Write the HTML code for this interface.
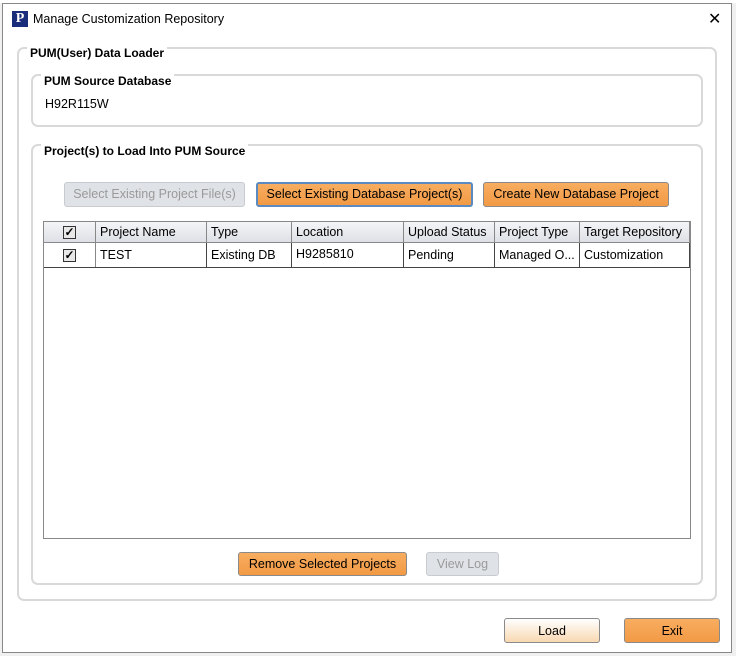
<!DOCTYPE html>
<html><head><style>
*{box-sizing:border-box;margin:0;padding:0}
body{width:736px;height:656px;background:#f0f0f0;font-family:"Liberation Sans",sans-serif;font-size:12.5px;color:#000;position:relative;overflow:hidden}
.a{position:absolute}
.win{left:2px;top:3px;width:730px;height:650px;background:#fff;border:1px solid #888}
.grp{border:2px solid #d9d9d9;border-radius:7px}
.lbl{background:#fff;font-weight:bold;font-size:12px;padding:0 3px;line-height:15px}
.btn{border-radius:3px;text-align:center;font-size:12.5px;line-height:23px;border:1px solid #8a8a8a}
.or{background:linear-gradient(#f8ad60,#f29a45);}
.dis{background:#dfe2e6;color:#9a9a9a;border-color:#c8ccd0}
.cell{position:absolute;top:0;height:100%;border-right:1px solid #888;padding-left:4px;line-height:21px;overflow:hidden;white-space:nowrap}
.cb{display:inline-block;width:13px;height:13px;border:1px solid #333;background:#e8e8e8;margin-top:4px;font-size:12px;line-height:11px;text-align:center;font-weight:bold}
</style></head><body>
<div class="a" style="left:0;top:0;width:736px;height:3px;background:#fff"></div>
<div class="a win">
 <div class="a" style="left:9px;top:7px;width:16px;height:16px;background:#1a2d7a;color:#fff;font-family:'Liberation Serif',serif;font-weight:bold;font-size:14px;line-height:16px;text-align:center">P</div>
 <div class="a" style="left:30px;top:8px;font-size:12.5px">Manage Customization Repository</div>
 <div class="a" style="left:705px;top:5px;font-size:16px;font-weight:300">✕</div>
</div>
<div class="a grp" style="left:17px;top:47px;width:700px;height:554px"></div>
<div class="a lbl" style="left:27px;top:46px">PUM(User) Data Loader</div>
<div class="a grp" style="left:31px;top:74px;width:672px;height:53px"></div>
<div class="a lbl" style="left:41px;top:74px">PUM Source Database</div>
<div class="a" style="left:45px;top:97px;font-size:12.5px">H92R115W</div>
<div class="a grp" style="left:31px;top:144px;width:672px;height:441px"></div>
<div class="a lbl" style="left:41px;top:144px">Project(s) to Load Into PUM Source</div>
<div class="a btn dis" style="left:64px;top:182px;width:181px;height:25px">Select Existing Project File(s)</div>
<div class="a btn or" style="left:256px;top:182px;width:217px;height:25px;border:2px solid #5a8ac0;line-height:21px">Select Existing Database Project(s)</div>
<div class="a btn or" style="left:483px;top:182px;width:186px;height:25px">Create New Database Project</div>
<div class="a" style="left:43px;top:221px;width:648px;height:318px;border:1px solid #888;background:#fff"></div>
<div class="a" style="left:44px;top:222px;width:646px;height:21px;background:linear-gradient(#f4f5f7,#dde0e5);border-bottom:1px solid #888">
 <div class="cell" style="left:0;width:52px;text-align:center;padding:0"><span class="cb">✓</span></div>
 <div class="cell" style="left:52px;width:111px;line-height:20px">Project Name</div>
 <div class="cell" style="left:163px;width:85px;line-height:20px">Type</div>
 <div class="cell" style="left:248px;width:112px;line-height:20px">Location</div>
 <div class="cell" style="left:360px;width:91px;line-height:20px">Upload Status</div>
 <div class="cell" style="left:451px;width:85px;line-height:20px">Project Type</div>
 <div class="cell" style="left:536px;width:110px;line-height:20px">Target Repository</div>
</div>
<div class="a" style="left:44px;top:243px;width:646px;height:25px;border-bottom:1px solid #444">
 <div class="cell" style="left:0;width:52px;text-align:center;padding:0;line-height:24px"><span class="cb">✓</span></div>
 <div class="cell" style="left:52px;width:111px;line-height:25px;border-color:#444">TEST</div>
 <div class="cell" style="left:163px;width:85px;line-height:25px;border-color:#444">Existing DB</div>
 <div class="cell" style="left:248px;width:112px;line-height:22px;border-color:#444">H9285810</div>
 <div class="cell" style="left:360px;width:91px;line-height:25px;border-color:#444">Pending</div>
 <div class="cell" style="left:451px;width:85px;line-height:25px;border-color:#444">Managed O...</div>
 <div class="cell" style="left:536px;width:110px;line-height:25px;border-color:#444">Customization</div>
</div>
<div class="a btn or" style="left:238px;top:552px;width:169px;height:24px">Remove Selected Projects</div>
<div class="a btn dis" style="left:426px;top:552px;width:73px;height:24px">View Log</div>
<div class="a btn" style="left:504px;top:618px;width:96px;height:25px;background:linear-gradient(#fff,#f8d8b0);line-height:24px">Load</div>
<div class="a btn or" style="left:624px;top:618px;width:96px;height:25px;line-height:24px">Exit</div>
</body></html>
